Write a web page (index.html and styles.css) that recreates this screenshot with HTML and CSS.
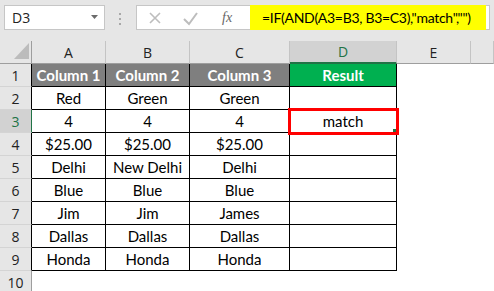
FILE: index.html
```html
<!DOCTYPE html>
<html lang="en">
<head>
	<meta charset="UTF-8">
	<title>AND in IF</title>
	<link rel="stylesheet" href="styles.css">
</head>
<body>
	<div class="formula-bar">
		<div class="name-box">
			<span>D3</span>
			<svg width="7" height="4" viewBox="0 0 7 4"><polygon points="0,0 7,0 3.5,4" fill="#6b6b6b"/></svg>
		</div>
		<div class="grip">
			<svg width="3" height="12" viewBox="0 0 3 12"><rect x="0" y="0" width="2" height="2" fill="#a8a8a8"/><rect x="0" y="5" width="2" height="2" fill="#a8a8a8"/><rect x="0" y="10" width="2" height="2" fill="#a8a8a8"/></svg>
		</div>
		<div class="formula-box">
			<div class="fx-buttons">
				<svg width="80" height="23" viewBox="0 0 80 23">
					<path d="M13 7 L23 17 M23 7 L13 17" stroke="#bdbdbd" stroke-width="1.6" fill="none"/>
					<path d="M47 13 L52 18 L60 7" stroke="#bdbdbd" stroke-width="2" fill="none"/>
				</svg>
				<span class="fx">fx</span>
			</div>
			<div class="formula">=IF(AND(A3=B3, B3=C3),"match","")</div>
		</div>
	</div>

	<table class="sheet">
		<colgroup>
			<col class="w-rh"><col class="w-a"><col class="w-b"><col class="w-c"><col class="w-d"><col class="w-e"><col class="w-f">
		</colgroup>
		<tr class="col-head">
			<th class="corner"><svg width="31" height="22" viewBox="0 0 31 22"><polygon points="29,2 29,18 14,18" fill="#bcbcbc"/></svg></th>
			<th>A</th><th>B</th><th>C</th><th class="active">D</th><th>E</th><th></th>
		</tr>
		<tr>
			<th class="rh">1</th>
			<td class="cell head-gray">Column 1</td><td class="cell head-gray">Column 2</td><td class="cell head-gray">Column 3</td><td class="cell head-green">Result</td><td></td><td></td>
		</tr>
		<tr>
			<th class="rh">2</th>
			<td class="cell">Red</td><td class="cell">Green</td><td class="cell">Green</td><td class="cell"></td><td></td><td></td>
		</tr>
		<tr>
			<th class="rh active">3</th>
			<td class="cell">4</td><td class="cell">4</td><td class="cell">4</td><td class="cell selected">match</td><td></td><td></td>
		</tr>
		<tr>
			<th class="rh">4</th>
			<td class="cell">$25.00</td><td class="cell">$25.00</td><td class="cell">$25.00</td><td class="cell"></td><td></td><td></td>
		</tr>
		<tr>
			<th class="rh">5</th>
			<td class="cell">Delhi</td><td class="cell">New Delhi</td><td class="cell">Delhi</td><td class="cell"></td><td></td><td></td>
		</tr>
		<tr>
			<th class="rh">6</th>
			<td class="cell">Blue</td><td class="cell">Blue</td><td class="cell">Blue</td><td class="cell"></td><td></td><td></td>
		</tr>
		<tr>
			<th class="rh">7</th>
			<td class="cell">Jim</td><td class="cell">Jim</td><td class="cell">James</td><td class="cell"></td><td></td><td></td>
		</tr>
		<tr>
			<th class="rh">8</th>
			<td class="cell">Dallas</td><td class="cell">Dallas</td><td class="cell">Dallas</td><td class="cell"></td><td></td><td></td>
		</tr>
		<tr>
			<th class="rh">9</th>
			<td class="cell">Honda</td><td class="cell">Honda</td><td class="cell">Honda</td><td class="cell"></td><td></td><td></td>
		</tr>
		<tr>
			<th class="rh rh-last">10</th>
			<td></td><td></td><td></td><td></td><td></td><td></td>
		</tr>
	</table>
</body>
</html>
```

FILE: styles.css
```css
* {margin: 0;padding: 0;box-sizing: border-box;}
html, body {height: 100%;background: #fff;overflow: hidden;}
body {font-family: Lato, "Open Sans", sans-serif;color: #000;}

/* formula bar */
.formula-bar {display: flex;align-items: flex-start;height: 41px;padding: 5px 0 0 4px;background: #e6e6e6;}
.name-box {display: flex;align-items: center;justify-content: space-between;width: 101px;height: 25px;padding: 0 6px 0 7px;background: #fff;border: 1px solid #c6c6c6;font: 14px "Open Sans", sans-serif;color: #222;}
.name-box svg {margin-bottom: 1px;}
.grip {display: flex;justify-content: center;width: 31px;padding-top: 8px;}
.formula-box {display: flex;width: 354px;height: 25px;background: #fff;border: 1px solid #c6c6c6;}
.fx-buttons {display: flex;align-items: center;width: 113px;}
.fx-buttons svg {display: block;}
.fx {margin-left: 5px;font: italic 14px "Liberation Serif", serif;color: #666;}
.formula {width: 236px;height: 25px;margin-top: -1px;padding-left: 12px;background: #ffff00;font-size: 14px;letter-spacing: -0.3px;line-height: 25px;white-space: nowrap;overflow: hidden;}

/* sheet */
.sheet {width: 494px;table-layout: fixed;border-spacing: 0;font-size: 15px;}
.w-rh {width: 32px;}
.w-a {width: 74px;}
.w-b {width: 84px;}
.w-c {width: 100px;}
.w-d {width: 107px;}
.w-e {width: 74px;}
.w-f {width: 23px;}
.sheet th, .sheet td {height: 23px;padding: 0;text-align: center;white-space: nowrap;overflow: hidden;}
.col-head th {height: 23px;background: #e6e6e6;border-right: 1px solid #c4c4c4;border-bottom: 1px solid #9e9e9e;font: 14px "Open Sans", sans-serif;color: #222;}
.col-head th.corner {border-right-color: #9e9e9e;}
.col-head th.corner svg {display: block;}
.col-head th.active {background: #d2d2d2;color: #217346;border-bottom: 2px solid #217346;}
.rh {background: #e6e6e6;border-right: 1px solid #000;border-bottom: 1px solid #d4d4d4;font: 14px "Open Sans", sans-serif;color: #222;}
.rh.active {background: #d2d2d2;color: #217346;border-right-color: #217346;}
.rh.rh-last {border-right-color: #9e9e9e;border-bottom: 0;}
.cell {border-right: 1px solid #000;border-bottom: 1px solid #000;}
.head-gray {background: #7f7f7f;color: #fff;font-weight: bold;}
.head-green {background: #00b050;color: #fff;font-weight: bold;}
.sheet td.selected {position: relative;overflow: visible;}
.selected::after {content: "";position: absolute;top: -2px;left: -2px;right: -3px;bottom: -3px;border: 3px solid #ff0000;z-index: 2;}
.selected::before {content: "";position: absolute;right: 0;bottom: 0;width: 3px;height: 3px;background: #217346;z-index: 3;}
```
